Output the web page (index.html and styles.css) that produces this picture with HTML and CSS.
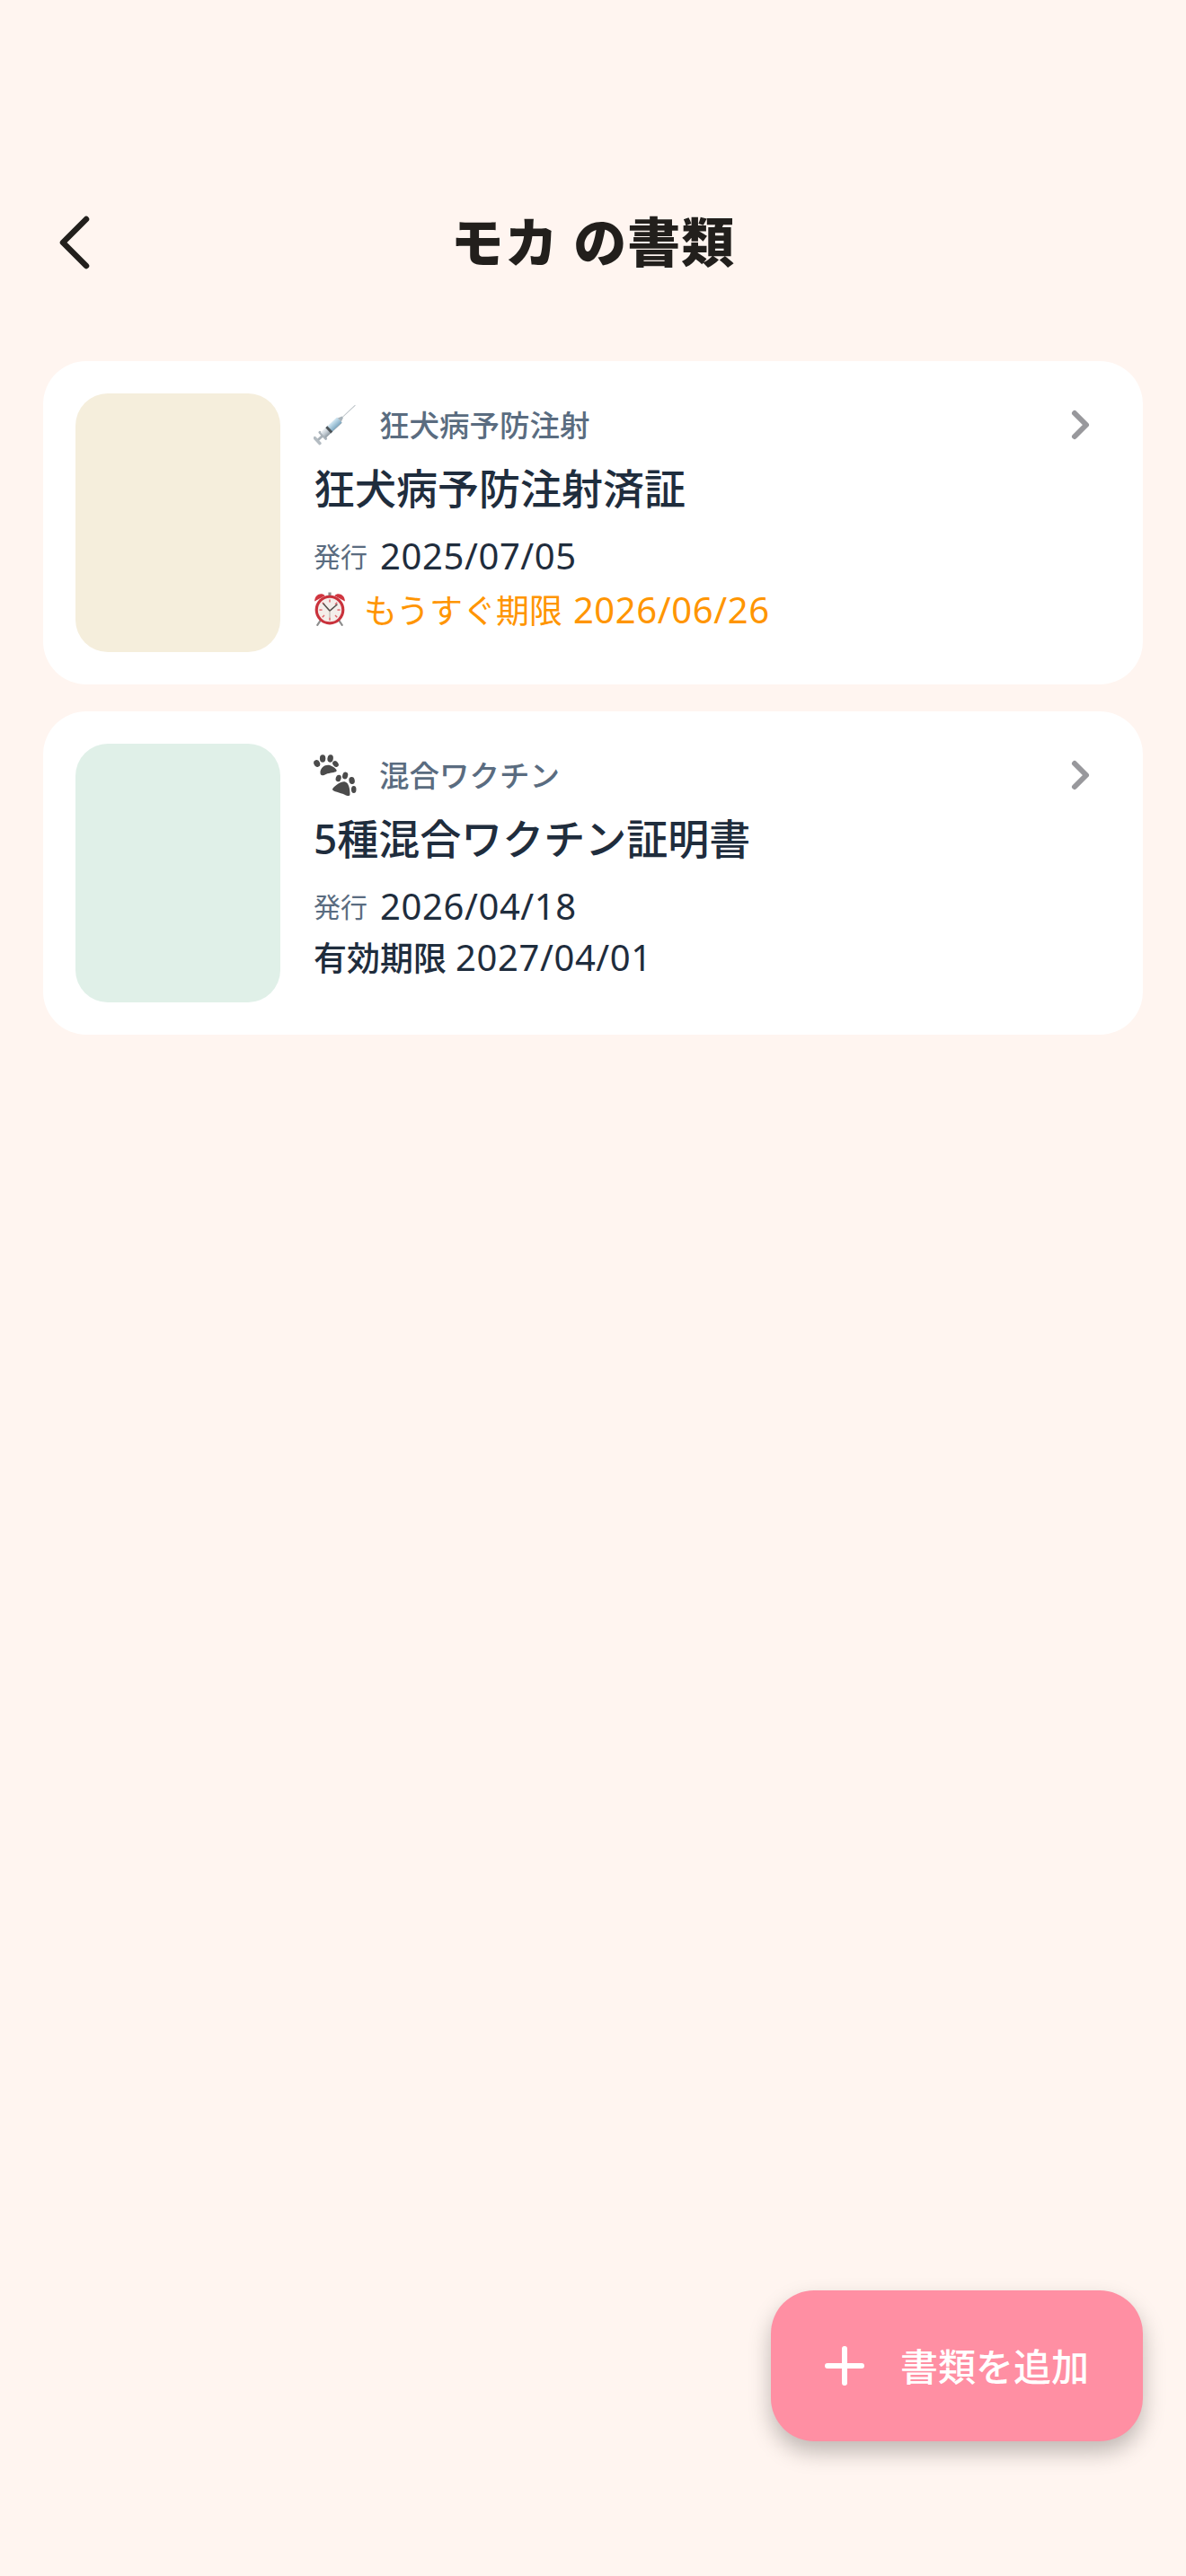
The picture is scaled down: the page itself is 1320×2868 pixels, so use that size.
FILE: index.html
```html
<!DOCTYPE html>
<html lang="ja">
  <head>
    <meta charset="utf-8">
    <meta name="viewport" content="width=device-width, initial-scale=1">
    <link rel="stylesheet" href="styles.css">
  </head>
  <body>
    <header class="topbar">
      <div class="back">
        <svg width="36" height="66" viewBox="0 0 36 66"><polyline points="32,7 6,33 32,59" fill="none" stroke="#221f1c" stroke-width="6.5" stroke-linecap="round" stroke-linejoin="round"/></svg>
      </div>
      <h1 class="page-title">モカ の書類</h1>
    </header>

    <main class="doc-list">
      <section class="doc-card">
        <div class="thumb thumb-rabies"></div>
        <div class="doc-body">
          <div class="doc-type">
            <span class="type-icon">
              <svg width="48" height="47" viewBox="0 0 50 48">
                <defs>
                  <linearGradient id="barrel" x1="0" y1="0" x2="0" y2="1">
                    <stop offset="0" stop-color="#eef2f5"/>
                    <stop offset="0.5" stop-color="#c3ccd3"/>
                    <stop offset="1" stop-color="#8d98a1"/>
                  </linearGradient>
                  <linearGradient id="liquid" x1="0" y1="0" x2="0" y2="1">
                    <stop offset="0" stop-color="#cfe6f2"/>
                    <stop offset="1" stop-color="#7fa9c2"/>
                  </linearGradient>
                </defs>
                <g transform="translate(3 43) rotate(-43)">
                  <rect x="0" y="-6" width="3.5" height="12" rx="1.5" fill="#b4bcc2"/>
                  <rect x="3" y="-1.5" width="7" height="3" fill="#a9b2b9"/>
                  <rect x="9" y="-6.5" width="3" height="13" rx="1.2" fill="#aab3ba"/>
                  <rect x="11" y="-4.5" width="26" height="9" rx="1" fill="url(#barrel)"/>
                  <rect x="21" y="-4" width="16" height="8" fill="url(#liquid)"/>
                  <rect x="19" y="-4.5" width="3" height="9" fill="#4c5358"/>
                  <polygon points="37,-3 42,-1 42,1 37,3" fill="#a8b3ba"/>
                  <line x1="42" y1="0" x2="62" y2="0" stroke="#b9c0c5" stroke-width="1"/>
                </g>
              </svg>
            </span>
            <span class="type-name">狂犬病予防注射</span>
            <svg class="chevron" width="24" height="36" viewBox="0 0 24 36"><polyline points="6,5 19,18 6,31" fill="none" stroke="#98989c" stroke-width="6" stroke-linecap="round" stroke-linejoin="round"/></svg>
          </div>
          <div class="doc-title">狂犬病予防注射済証</div>
          <div class="doc-line">
            <span class="issue-label">発行</span>
            <span class="date">2025/07/05</span>
          </div>
          <div class="doc-line expiring">
            <svg class="clock" width="38" height="38" viewBox="0 0 36 36">
              <line x1="9" y1="29" x2="5" y2="35" stroke="#8d8d8d" stroke-width="2" stroke-linecap="round"/>
              <line x1="27" y1="29" x2="31" y2="35" stroke="#8d8d8d" stroke-width="2" stroke-linecap="round"/>
              <rect x="16.5" y="0.5" width="3" height="4" fill="#8d8d8d"/>
              <path d="M2 10 C2 3 9 0 13 4 Z" fill="#d0353f"/>
              <path d="M34 10 C34 3 27 0 23 4 Z" fill="#d0353f"/>
              <circle cx="18" cy="19" r="15.5" fill="#c9323c"/>
              <circle cx="18" cy="19" r="12.5" fill="#f4eeea"/>
              <g stroke="#e0666c" stroke-width="1.4">
                <line x1="18" y1="8" x2="18" y2="11"/>
                <line x1="18" y1="27" x2="18" y2="30"/>
                <line x1="7" y1="19" x2="10" y2="19"/>
                <line x1="26" y1="19" x2="29" y2="19"/>
                <line x1="10.2" y1="11.2" x2="12.3" y2="13.3"/>
                <line x1="25.8" y1="11.2" x2="23.7" y2="13.3"/>
                <line x1="10.2" y1="26.8" x2="12.3" y2="24.7"/>
                <line x1="25.8" y1="26.8" x2="23.7" y2="24.7"/>
              </g>
              <polyline points="11,12 18,20 26,13" fill="none" stroke="#55504c" stroke-width="1.4"/>
              <line x1="18" y1="20" x2="18" y2="27" stroke="#b9aea6" stroke-width="1"/>
            </svg>
            <span class="kana">もうすぐ期限</span>
            <span class="date">2026/06/26</span>
          </div>
        </div>
      </section>

      <section class="doc-card">
        <div class="thumb thumb-combo"></div>
        <div class="doc-body">
          <div class="doc-type">
            <span class="type-icon">
              <svg width="49" height="46" viewBox="0 0 46 46" preserveAspectRatio="none" fill="#4b4b4b">
                <ellipse cx="3.5" cy="10" rx="3.2" ry="4" transform="rotate(-20 3.5 10)"/>
                <ellipse cx="9.5" cy="4.5" rx="3" ry="4.2"/>
                <ellipse cx="17.5" cy="4.5" rx="3" ry="4.2" transform="rotate(8 17.5 4.5)"/>
                <ellipse cx="23" cy="10.5" rx="2.8" ry="3.6" transform="rotate(-35 23 10.5)"/>
                <path d="M7 20 C7 14 13 10.5 17 12 C21 13.5 25 17 24 18.5 C22.5 20.5 17 20 13 22 C9.5 24 7 24 7 20 Z"/>
                <g transform="translate(20 19)">
                  <ellipse cx="6" cy="7.5" rx="2.8" ry="3.8" transform="rotate(15 6 7.5)"/>
                  <ellipse cx="13" cy="4.5" rx="2.8" ry="4" transform="rotate(15 13 4.5)"/>
                  <ellipse cx="20" cy="10" rx="3" ry="4" transform="rotate(-10 20 10)"/>
                  <ellipse cx="22" cy="20" rx="2.6" ry="4"/>
                  <path d="M0 19 C3 15 9 10.5 13 11.5 C17 12.5 18 20 18 25 C18 28 15.5 27.5 12 25.5 C8 23.5 -2 22 0 19 Z"/>
                </g>
              </svg>
            </span>
            <span class="type-name">混合ワクチン</span>
            <svg class="chevron" width="24" height="36" viewBox="0 0 24 36"><polyline points="6,5 19,18 6,31" fill="none" stroke="#98989c" stroke-width="6" stroke-linecap="round" stroke-linejoin="round"/></svg>
          </div>
          <div class="doc-title">5種混合ワクチン証明書</div>
          <div class="doc-line">
            <span class="issue-label">発行</span>
            <span class="date">2026/04/18</span>
          </div>
          <div class="doc-line valid">
            <span class="kana">有効期限</span>
            <span class="date">2027/04/01</span>
          </div>
        </div>
      </section>
    </main>

    <button class="add-btn">
      <svg width="44" height="44" viewBox="0 0 44 44"><path d="M22 3V41M3 22H41" fill="none" stroke="#fff" stroke-width="6" stroke-linecap="round"/></svg>
      <span class="add-label">書類を追加</span>
    </button>
  </body>
</html>
```

FILE: styles.css
```css
* {
  box-sizing: border-box;
}
body {
  margin: 0;
  height: 2868px;
  position: relative;
  overflow: hidden;
  background: #fff5f0;
  font-family: "Noto Sans", "Noto Sans CJK JP", sans-serif;
  color: #1f2d3d;
}

.topbar {
  display: flex;
  align-items: center;
  justify-content: center;
  position: relative;
  height: 120px;
  margin-top: 210px;
}
.back {
  position: absolute;
  left: 64px;
  top: 27px;
  display: flex;
}
.page-title {
  margin: 0;
  padding-bottom: 8px;
  font-size: 59px;
  font-weight: 900;
  color: #221f1c;
  letter-spacing: 1px;
}

.doc-list {
  display: flex;
  flex-direction: column;
  gap: 30px;
  margin: 72px 48px 0;
}
.doc-card {
  display: flex;
  gap: 37px;
  height: 360px;
  padding: 36px;
  background: #fff;
  border-radius: 48px;
}
.thumb {
  flex: none;
  width: 228px;
  height: 288px;
  border-radius: 36px;
}
.thumb-rabies {
  background: #f5eedc;
}
.thumb-combo {
  background: #e0f0e8;
}

.doc-body {
  flex: 1;
  display: flex;
  flex-direction: column;
  padding-right: 22px;
}
.doc-type {
  display: flex;
  align-items: center;
  height: 70px;
}
.type-icon {
  display: flex;
  flex: none;
  width: 73px;
}
.type-name {
  flex: 1;
  padding-bottom: 3px;
  font-size: 33.5px;
  font-weight: 500;
  color: #5a6c80;
}
.doc-title {
  height: 72px;
  line-height: 71px;
  font-size: 46px;
  font-weight: 500;
}
.doc-line {
  display: flex;
  align-items: center;
  height: 60px;
}
.doc-title + .doc-line {
  margin-top: 8px;
}
.issue-label {
  font-size: 30px;
  color: #5a6c80;
  margin-right: 14px;
}
.date {
  font-size: 40px;
  letter-spacing: 0.6px;
}
.kana {
  font-size: 37px;
  margin-right: 12px;
}
.expiring {
  color: #ff9500;
}
.clock {
  flex: none;
  margin-left: -1px;
  margin-right: 19px;
}
.valid {
  padding-bottom: 6px;
}
.valid .kana {
  font-weight: 500;
  margin-right: 10px;
}

.add-btn {
  position: absolute;
  right: 48px;
  top: 2550px;
  display: flex;
  align-items: center;
  gap: 40px;
  height: 168px;
  padding: 0 60px;
  border: 0;
  border-radius: 48px;
  background: #ff8fa3;
  color: #fff;
  font-family: inherit;
  font-size: 42px;
  font-weight: 500;
  box-shadow: 0 12px 24px rgba(0, 0, 0, 0.25);
}
.add-label {
  padding-bottom: 3px;
}
```
